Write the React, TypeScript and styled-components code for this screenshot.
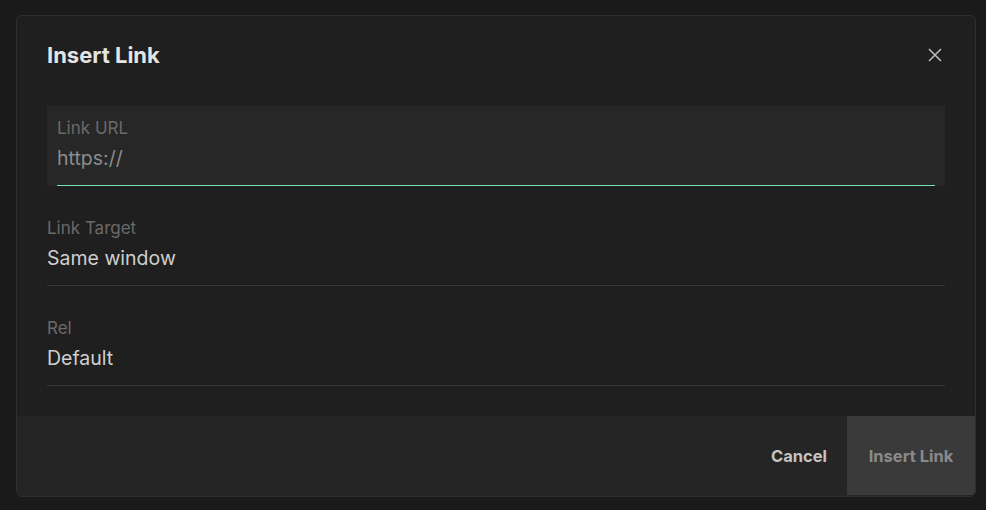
import React from 'react';
import styled, { createGlobalStyle } from 'styled-components';

const GlobalStyle = createGlobalStyle`
  html, body {
    margin: 0;
    padding: 0;
    background: #1a1a1a;
    font-family: Inter, "Noto Sans", "Liberation Sans", sans-serif;
  }
  * { box-sizing: border-box; }
`;

const Page = styled.div`
  padding: 15px 10px 13px 16px;
  min-height: 510px;
`;

const Dialog = styled.div`
  display: flex;
  flex-direction: column;
  width: 960px;
  background: #1f1f1f;
  border: 1px solid #2f2f2f;
  border-radius: 6px;
  overflow: hidden;
`;

const Header = styled.div`
  display: flex;
  align-items: center;
  justify-content: space-between;
  padding: 25px 31px 0 30px;
`;

const Title = styled.h2`
  margin: 0;
  font-size: 22px;
  line-height: 28px;
  font-weight: 700;
  color: #e4e4e4;
`;

const CloseButton = styled.button`
  display: flex;
  align-items: center;
  justify-content: center;
  width: 18px;
  height: 18px;
  padding: 0;
  border: none;
  background: none;
  color: #bdbdbd;
  cursor: pointer;
`;

const Body = styled.div`
  display: flex;
  flex-direction: column;
  padding: 37px 30px 30px 30px;
`;

const TextField = styled.div`
  display: flex;
  flex-direction: column;
  height: 80px;
  padding: 12px 10px 0;
  background: #272727;
`;

const FieldLabel = styled.label`
  font-size: 17px;
  line-height: 20px;
  color: #6a6a6a;
`;

const Input = styled.input`
  margin-top: 8px;
  padding: 0 0 15px;
  height: 40px;
  border: none;
  border-bottom: 1px solid #73e2b0;
  background: transparent;
  font-family: inherit;
  font-size: 19.5px;
  line-height: 24px;
  color: #8c8c8c;
  outline: none;

  &::placeholder {
    color: #8c8c8c;
  }
`;

const SelectRow = styled.div`
  display: flex;
  flex-direction: column;
  padding: 32px 0 15px;
  border-bottom: 1px solid #383838;
`;

const SelectValue = styled.div`
  margin-top: 8px;
  font-size: 19.5px;
  line-height: 24px;
  color: #cfcfcf;
`;

const Footer = styled.div`
  display: flex;
  justify-content: flex-end;
  height: 80px;
  padding-bottom: 1px;
  background: #252525;
`;

const FooterButton = styled.button<{ $primary?: boolean }>`
  display: flex;
  align-items: center;
  justify-content: center;
  height: 100%;
  padding: 0 20px;
  min-width: ${p => (p.$primary ? '128px' : '96px')};
  border: none;
  background: ${p => (p.$primary ? '#3a3a3a' : 'transparent')};
  color: ${p => (p.$primary ? '#8a8a8a' : '#c4c4c4')};
  font-family: inherit;
  font-size: 16.5px;
  font-weight: 700;
  cursor: ${p => (p.$primary ? 'default' : 'pointer')};
`;

const CloseIcon = () => (
  <svg width="14" height="14" viewBox="0 0 14 14" fill="none">
    <path d="M1 1L13 13M13 1L1 13" stroke="currentColor" strokeWidth="1.5" />
  </svg>
);

export default function App() {
  return (
    <>
      <GlobalStyle />
      <Page>
        <Dialog>
          <Header>
            <Title>Insert Link</Title>
            <CloseButton aria-label="Close">
              <CloseIcon />
            </CloseButton>
          </Header>
          <Body>
            <TextField>
              <FieldLabel>Link URL</FieldLabel>
              <Input placeholder="https://" />
            </TextField>
            <SelectRow>
              <FieldLabel>Link Target</FieldLabel>
              <SelectValue>Same window</SelectValue>
            </SelectRow>
            <SelectRow>
              <FieldLabel>Rel</FieldLabel>
              <SelectValue>Default</SelectValue>
            </SelectRow>
          </Body>
          <Footer>
            <FooterButton>Cancel</FooterButton>
            <FooterButton $primary disabled>
              Insert Link
            </FooterButton>
          </Footer>
        </Dialog>
      </Page>
    </>
  );
}
